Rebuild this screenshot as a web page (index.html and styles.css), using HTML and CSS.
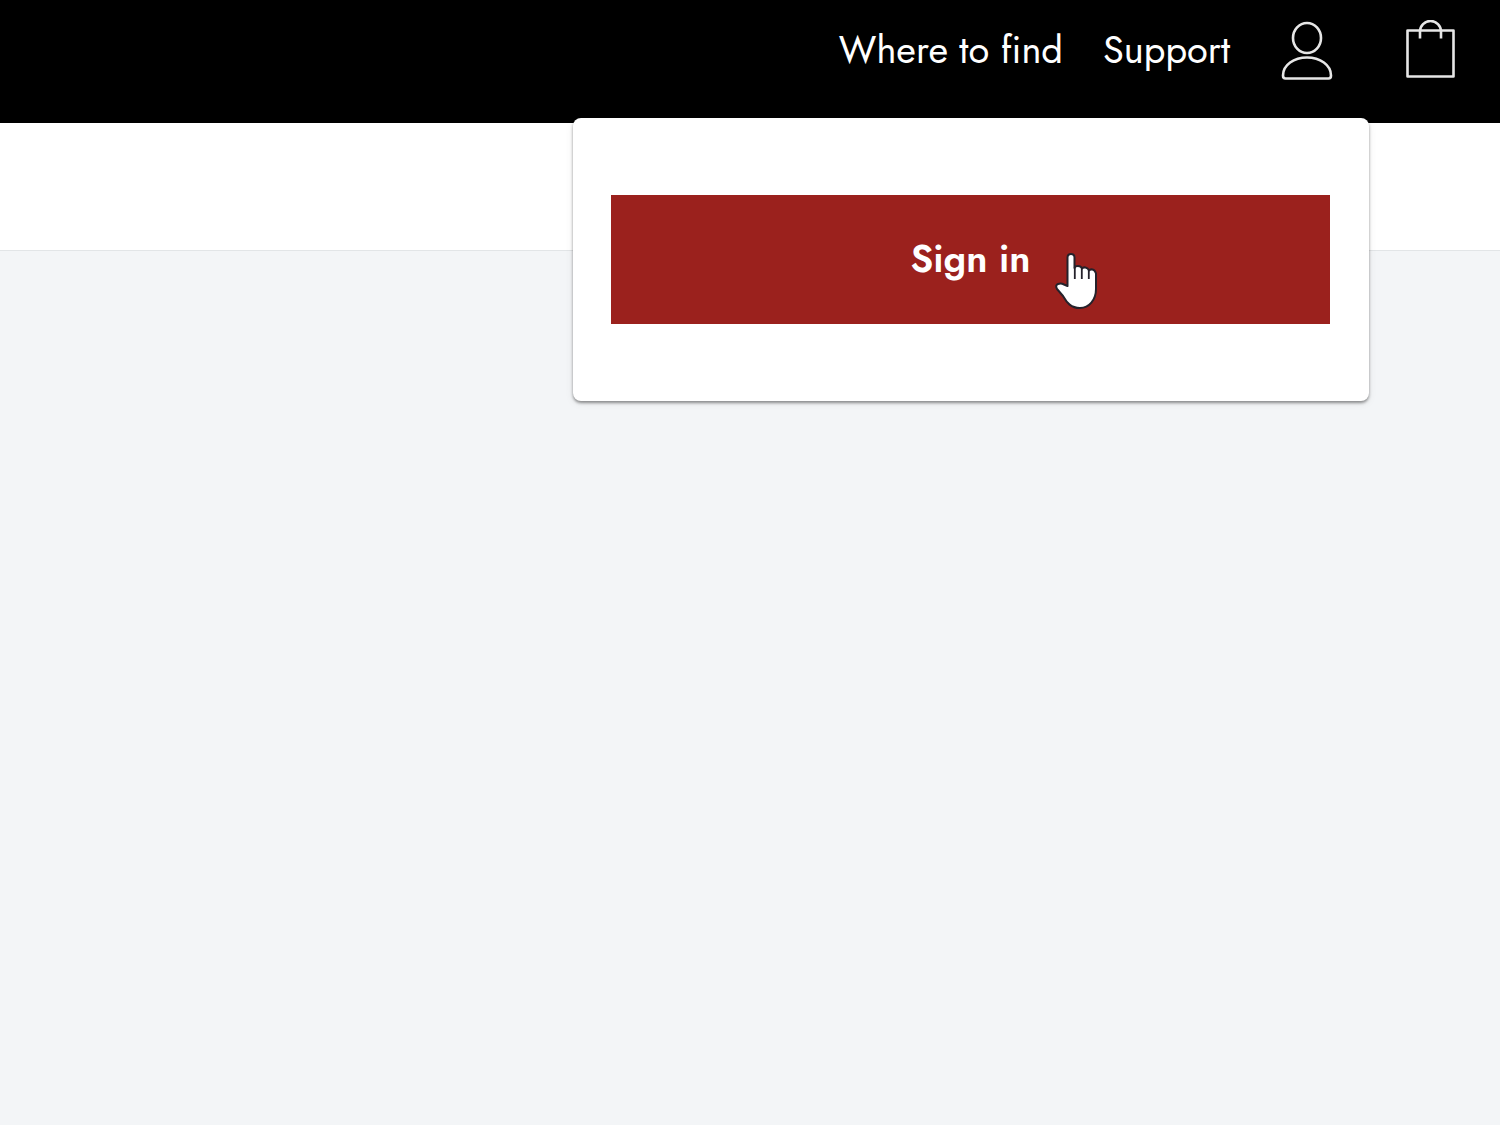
FILE: index.html
```html
<!DOCTYPE html>
<html lang="en">
<head>
<meta charset="utf-8">
<meta name="viewport" content="width=device-width, initial-scale=1">
<title>Sign in</title>
<link rel="stylesheet" href="styles.css">
</head>
<body>
<header class="site-header">
  <nav class="site-nav" aria-label="Main">
    <a class="nav-link" href="#find">Where to find</a>
    <a class="nav-link" href="#support">Support</a>
  </nav>
  <button class="icon-button account" type="button" aria-label="Account" aria-expanded="true">
    <svg width="52" height="60" viewBox="0 0 52 60" fill="none" stroke="#e6e6e6" stroke-width="2.6" stroke-linejoin="round">
      <ellipse cx="26" cy="18" rx="14" ry="15"/>
      <path d="M4.500 58.500H47.500Q50 58.500 50 55.500C50 45 39 37.500 26 37.500S2 45 2 55.500Q2 58.500 4.500 58.500Z"/>
    </svg>
  </button>
  <button class="icon-button" type="button" aria-label="Shopping bag">
    <svg width="50" height="60" viewBox="0 0 50 60" fill="none" stroke="#e6e6e6" stroke-width="2.6" stroke-linejoin="round">
      <path d="M1.500 10.500H47.500V56.500H1.500Z"/>
      <path d="M14 18.500V11.500A10.500 10.500 0 0 1 35 11.500V18.500"/>
    </svg>
  </button>
  <div class="account-menu">
    <button class="sign-in" type="button">Sign in</button>
    <svg class="pointer" width="44" height="58" viewBox="0 0 44 58" fill="#fff" stroke="#25222b" stroke-width="2" stroke-linejoin="round">
      <path d="M12.500 34V5.500Q12.500 2 16 2T19.500 5.500V16Q20 14 23 14T27 16.500Q28 15 30.500 15.500T34 18.500Q35 17 37.500 17.500T41 21.500V37C41 48 34 56 25 56C16 56 12 51 8 44L2 37Q0 33 3 32T9 32.500Z"/>
      <path d="M19.800 15V27M26.800 16V27M33.800 18V27" stroke-width="1.800"/>
    </svg>
  </div>
</header>
<div class="sub-bar"></div>
<main></main>
</body>
</html>
```
FILE: styles.css
```css
* {
  box-sizing: border-box;
}

body {
  min-height: 100vh;
  margin: 0;
  background: #f3f5f7;
  font-family: Jost, Futura, Lato, sans-serif;
}

.site-header {
  position: relative;
  display: flex;
  align-items: flex-start;
  justify-content: flex-end;
  height: 123px;
  padding: 20px 44px 0 24px;
  background: #000;
}

.site-nav {
  display: flex;
  gap: 40px;
  margin-right: 51px;
}

.nav-link {
  color: #fff;
  font-size: 38px;
  font-weight: 400;
  line-height: 60px;
  white-space: nowrap;
  text-decoration: none;
}

.icon-button {
  display: block;
  padding: 0;
  border: 0;
  background: none;
  cursor: pointer;
}

.icon-button svg {
  display: block;
}

.account {
  margin-right: 73px;
}

.account-menu {
  position: absolute;
  top: 118px;
  right: 131px;
  width: 796px;
  max-width: calc(100% - 131px);
  padding: 77px 39px 77px 38px;
  border-radius: 8px;
  background: #fff;
  box-shadow: 0 2px 3px rgba(0, 0, 0, 0.4), 0 2px 8px rgba(0, 0, 0, 0.08);
}

.sign-in {
  display: block;
  width: 100%;
  height: 129px;
  padding: 0 0 2px;
  border: 0;
  background: #9b211d;
  color: #fff;
  font: inherit;
  font-size: 38px;
  font-weight: 600;
  cursor: pointer;
}

.pointer {
  position: absolute;
  top: 134px;
  right: 270px;
}

.sub-bar {
  height: 128px;
  border-bottom: 1px solid #e2e5e7;
  background: #fff;
}
```
